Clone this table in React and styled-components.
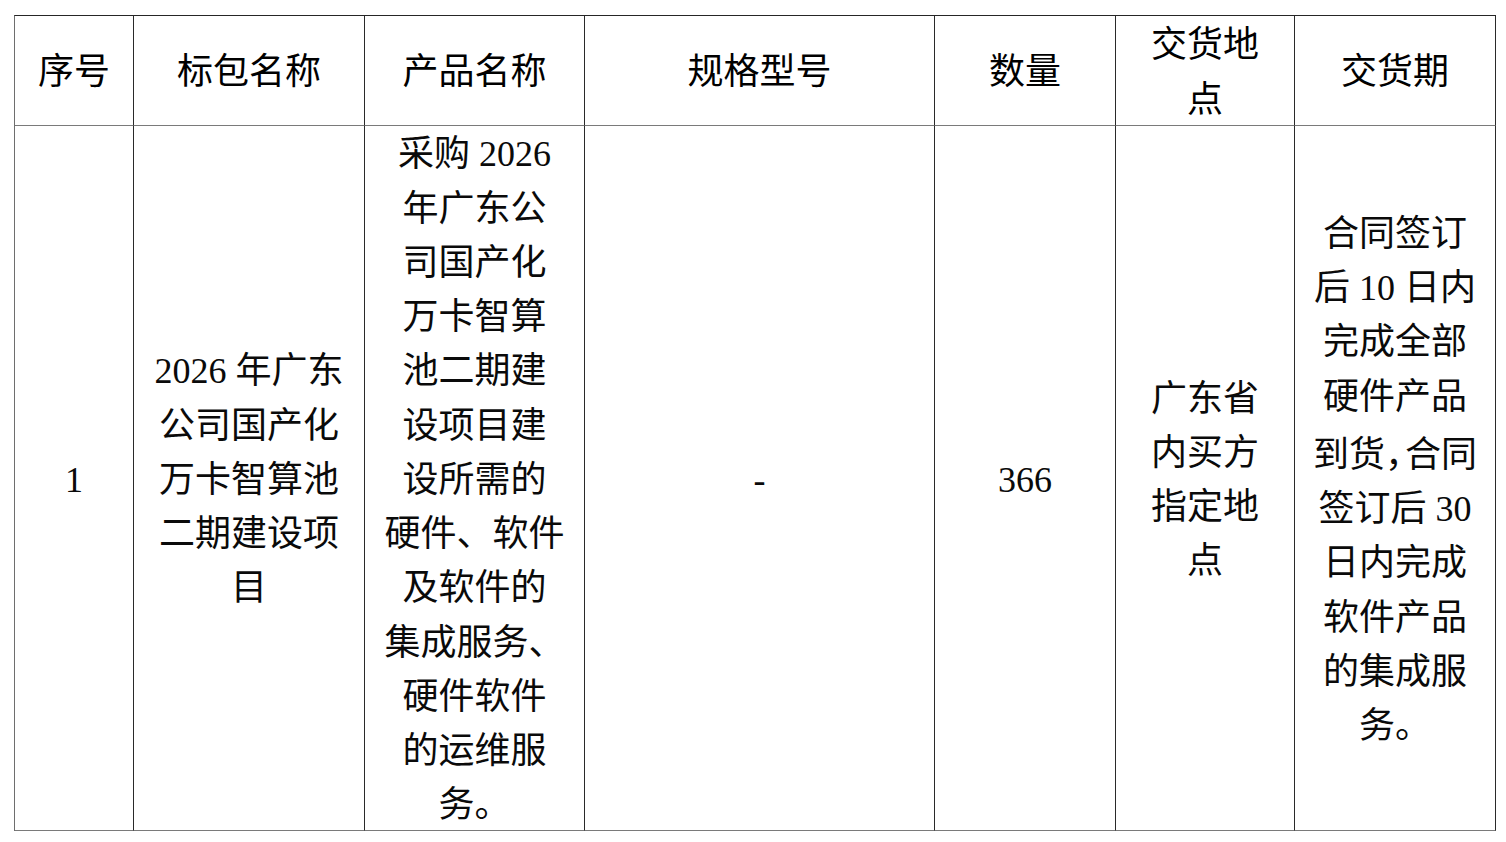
import styled, { createGlobalStyle } from "styled-components";

const GlobalStyle = createGlobalStyle`
    html, body {
        margin: 0;
        padding: 0;
        background: #ffffff;
    }

    body {
        font-family: "Liberation Serif", "Noto Sans CJK SC", serif;
        color: #000000;
    }
`;

const Page = styled.div`
    padding: 15px 0 0 14px;
`;

const Table = styled.div`
    display: grid;
    grid-template-columns: ${(p) => p.$cols.map((w) => `${w}px`).join(" ")};
    grid-template-rows: 110px 705px;
    width: max-content;
    border-left: 1px solid #6e6e6e;
    border-top: 1px solid #262626;
`;

const Cell = styled.div`
    box-sizing: border-box;
    display: flex;
    align-items: center;
    justify-content: center;
    padding-top: 4px;
    text-align: center;
    border-right: 1px solid #2a2a2a;
    border-bottom: 1px solid #7a7a7a;
    font-size: 36px;
    font-weight: 400;
    line-height: 54.25px;
    white-space: nowrap;
`;

const HeadCell = styled(Cell)`
    color: #000000;
`;

const BodyCell = styled(Cell)`
    color: #0a0a0a;
`;

const Line = styled.span`
    display: block;
`;

const NarrowComma = styled.span`
    font-family: "Noto Sans CJK SC", sans-serif;
    letter-spacing: -16px;
`;

const columns = [
    { title: ["序号"], width: 119 },
    { title: ["标包名称"], width: 231 },
    { title: ["产品名称"], width: 220 },
    { title: ["规格型号"], width: 350 },
    { title: ["数量"], width: 181 },
    { title: ["交货地", "点"], width: 179 },
    { title: ["交货期"], width: 201 },
];

const row = [
    ["1"],
    ["2026 年广东", "公司国产化", "万卡智算池", "二期建设项", "目"],
    [
        "采购 2026",
        "年广东公",
        "司国产化",
        "万卡智算",
        "池二期建",
        "设项目建",
        "设所需的",
        "硬件、软件",
        "及软件的",
        "集成服务、",
        "硬件软件",
        "的运维服",
        "务。",
    ],
    ["-"],
    ["366"],
    ["广东省", "内买方", "指定地", "点"],
    [
        "合同签订",
        "后 10 日内",
        "完成全部",
        "硬件产品",
        <>到货<NarrowComma>，</NarrowComma>合同</>,
        "签订后 30",
        "日内完成",
        "软件产品",
        "的集成服",
        "务。",
    ],
];

export default function App() {
    return (
        <>
            <GlobalStyle />
            <Page>
                <Table $cols={columns.map((c) => c.width)}>
                    {columns.map((col, i) => (
                        <HeadCell key={`h${i}`}>
                            <div>
                                {col.title.map((line, j) => <Line key={j}>{line}</Line>)}
                            </div>
                        </HeadCell>
                    ))}
                    {row.map((lines, i) => (
                        <BodyCell key={`b${i}`}>
                            <div>
                                {lines.map((line, j) => <Line key={j}>{line}</Line>)}
                            </div>
                        </BodyCell>
                    ))}
                </Table>
            </Page>
        </>
    );
}
